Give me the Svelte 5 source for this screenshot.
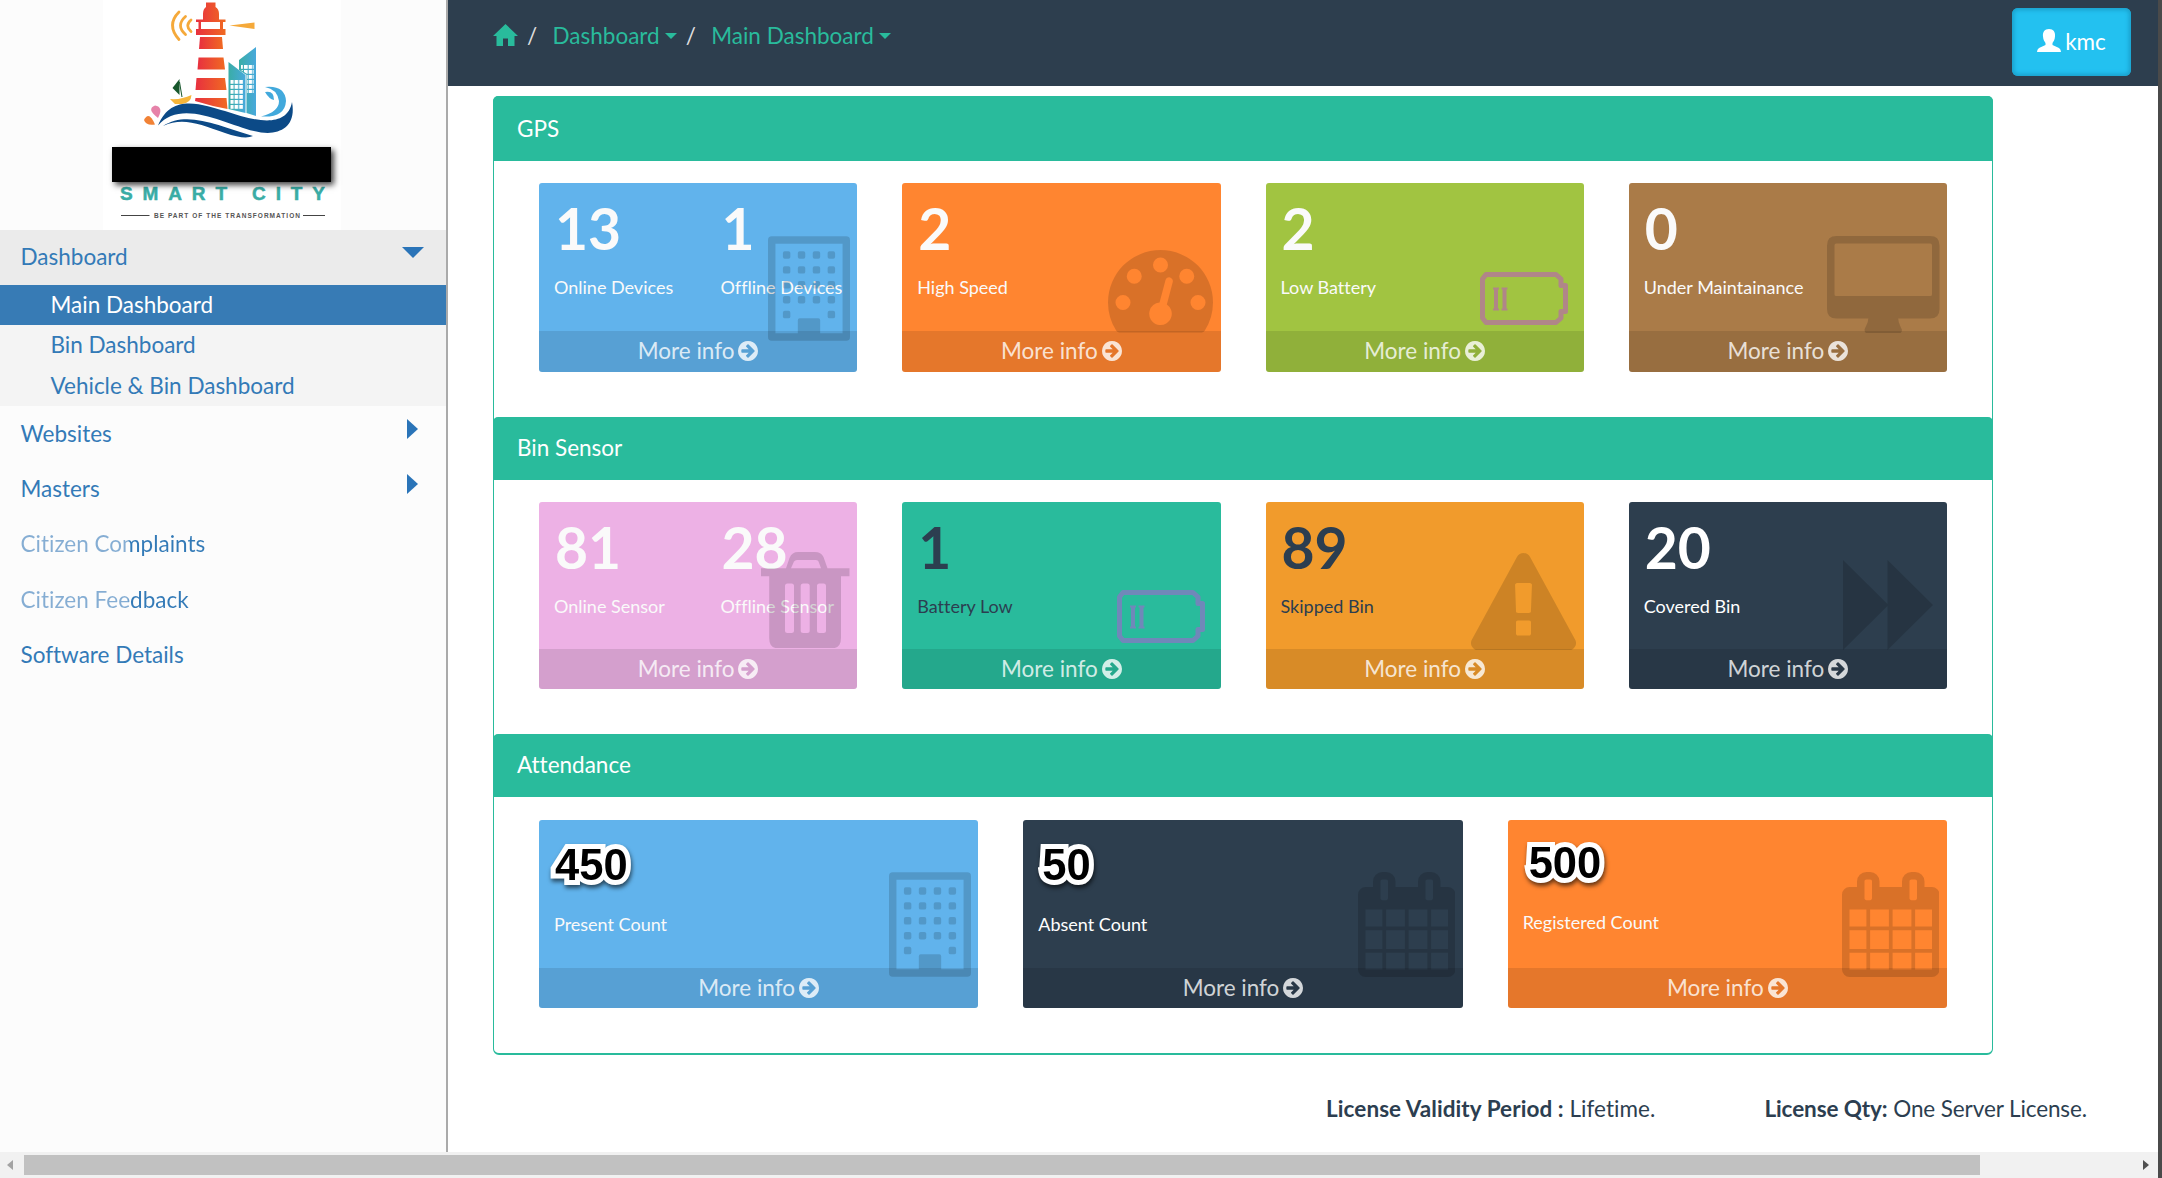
<script>
  const nav = [
    { label: 'Websites', arrow: true },
    { label: 'Masters', arrow: true },
    { label: 'Citizen Complaints', faded: true },
    { label: 'Citizen Feedback', faded: true },
    { label: 'Software Details' }
  ];

  const sections = [
    {
      title: 'GPS',
      kind: 'gps',
      cards: [
        { tone: 'sky', icon: 'building', stats: [['13', 'Online Devices'], ['1', 'Offline Devices']] },
        { tone: 'orange', icon: 'speed', stats: [['2', 'High Speed']] },
        { tone: 'lime', icon: 'battery', stats: [['2', 'Low Battery']] },
        { tone: 'brown', icon: 'desktop', stats: [['0', 'Under Maintainance']] }
      ]
    },
    {
      title: 'Bin Sensor',
      kind: 'bins',
      cards: [
        { tone: 'pink', icon: 'trash', stats: [['81', 'Online Sensor'], ['28', 'Offline Sensor']] },
        { tone: 'teal', icon: 'battery', stats: [['1', 'Battery Low']] },
        { tone: 'amber', icon: 'warning', stats: [['89', 'Skipped Bin']] },
        { tone: 'navy', icon: 'forward', stats: [['20', 'Covered Bin']] }
      ]
    },
    {
      title: 'Attendance',
      kind: 'attendance',
      cards: [
        { tone: 'sky', icon: 'building', stats: [['450', 'Present Count']] },
        { tone: 'navy', icon: 'calendar', stats: [['50', 'Absent Count']] },
        { tone: 'orange', icon: 'calendar', stats: [['500', 'Registered Count']] }
      ]
    }
  ];

  const windows = [0, 1, 2, 3, 4].flatMap((r) =>
    [0, 1, 2, 3].filter((c) => r < 4 || c === 0 || c === 3).map((c) => [256 + c * 256, 256 + r * 256])
  );
</script>

{#snippet icon(name)}
  {#if name === 'building'}
    <svg class="icon building" viewBox="0 0 1408 1792">
      <path fill-rule="evenodd" d="M64 0H1344Q1408 0 1408 64V1728Q1408 1792 1344 1792H64Q0 1792 0 1728V64Q0 0 64 0ZM128 128V1664H512V1440Q512 1408 544 1408H864Q896 1408 896 1440V1664H1280V128Z" />
      {#each windows as [x, y]}<rect {x} {y} width="128" height="128" rx="32" />{/each}
    </svg>
  {:else if name === 'speed'}
    <svg class="icon speed" viewBox="0 256 1792 1408"><path d="M384 1152q0-53-37.5-90.5t-90.5-37.5-90.5 37.5-37.5 90.5 37.5 90.5 90.5 37.5 90.5-37.5 37.5-90.5zm192-448q0-53-37.5-90.5t-90.5-37.5-90.5 37.5-37.5 90.5 37.5 90.5 90.5 37.5 90.5-37.5 37.5-90.5zm428 481l101-382q6-26-7.5-48.5t-38.5-29.5-48 6.5-30 39.5l-101 382q-60 5-107 43.5t-63 98.5q-20 77 20 146t117 89 146-20 89-117q16-60-6-117t-72-91zm660-33q0-53-37.5-90.5t-90.5-37.5-90.5 37.5-37.5 90.5 37.5 90.5 90.5 37.5 90.5-37.5 37.5-90.5zm-640-640q0-53-37.5-90.5t-90.5-37.5-90.5 37.5-37.5 90.5 37.5 90.5 90.5 37.5 90.5-37.5 37.5-90.5zm448 192q0-53-37.5-90.5t-90.5-37.5-90.5 37.5-37.5 90.5 37.5 90.5 90.5 37.5 90.5-37.5 37.5-90.5zm320 448q0 261-141 483-19 29-54 29h-1402q-35 0-54-29-141-221-141-483 0-182 71-348t191-286 286-191 348-71 348 71 286 191 191 286 71 348z" /></svg>
  {:else if name === 'battery'}
    <svg class="icon battery" viewBox="0 0 88 53">
      <path d="M6 2.5H76L81 7V13.5H85.5V39.5H81V46L76 50.5H6L2.5 46V7Z" fill="none" stroke="currentColor" stroke-width="5" stroke-linejoin="round" />
      <path d="M13 15.5h6v2h-1v19h1v2h-6v-2h1v-19h-1zM21.500 15.500h6v2h-1v19h1v2h-6v-2h1v-19h-1z" />
    </svg>
  {:else if name === 'desktop'}
    <svg class="icon desktop" viewBox="0 0 1920 1664"><path fill-rule="evenodd" d="M160 0H1760Q1920 0 1920 160V1248Q1920 1408 1760 1408H1216Q1216 1460 1248 1532T1280 1600Q1280 1664 1216 1664H704Q640 1664 640 1600Q640 1590 672 1525T704 1408H160Q0 1408 0 1248V160Q0 0 160 0ZM160 128Q128 128 128 160V992Q128 1024 160 1024H1760Q1792 1024 1792 992V160Q1792 128 1760 128Z" /></svg>
  {:else if name === 'trash'}
    <svg class="icon trash" viewBox="0 0 88.500 96.300"><path fill-rule="evenodd" d="M0 16.300H25L28.500 6Q31 0 37 0H54Q60 0 62.500 5L66.500 16.300H88.500V24.300H80V86Q80 96.300 71 96.300H17Q8.200 96.300 8.200 86V24.300H0ZM30 16.300H60L57.500 9.500Q57 8 55 8H36Q34 8 33 9.500ZM24 34q0-2.500 2.500-2.500h4q2.500 0 2.500 2.500v44.500q0 2.500-2.500 2.500h-4q-2.500 0-2.500-2.500zM39.700 34q0-2.500 2.500-2.500h4q2.500 0 2.500 2.500v44.500q0 2.500-2.500 2.500h-4q-2.500 0-2.500-2.500zM56 34q0-2.500 2.500-2.500h4q2.500 0 2.500 2.500v44.500q0 2.500-2.500 2.500h-4q-2.500 0-2.500-2.500z" /></svg>
  {:else if name === 'warning'}
    <svg class="icon warning" viewBox="0 0 1792 1664"><path d="M1024 1375v-190q0-14-9.500-23.500t-22.500-9.500h-192q-13 0-22.500 9.500t-9.500 23.500v190q0 14 9.500 23.500t22.500 9.500h192q13 0 22.500-9.500t9.500-23.500zm-2-374l18-459q0-12-10-19-13-11-24-11h-220q-11 0-24 11-10 7-10 21l17 457q0 10 10 16.500t24 6.500h185q14 0 23.500-6.500t10.500-16.500zm-14-934l768 1408q35 63-2 126-17 29-46.500 46t-63.500 17h-1536q-34 0-63.500-17t-46.500-46q-37-63-2-126l768-1408q17-31 47-49t65-18 65 18 47 49z" /></svg>
  {:else if name === 'forward'}
    <svg class="icon forward" viewBox="0 0 90 90"><path d="M0 0 44.500 44V0L90 45 44.500 90V46L0 90Z" /></svg>
  {:else}
    <svg class="icon calendar" viewBox="64 0 1664 1792"><path d="M192 1664h288v-288h-288v288zm352 0h320v-288h-320v288zm-352-352h288v-320h-288v320zm352 0h320v-320h-320v320zm-352-384h288v-288h-288v288zm736 736h320v-288h-320v288zm-384-736h320v-288h-320v288zm768 736h288v-288h-288v288zm-384-352h320v-320h-320v320zm-352-864v-288q0-13-9.500-22.500t-22.500-9.500h-64q-13 0-22.500 9.500t-9.500 22.500v288q0 13 9.500 22.500t22.500 9.500h64q13 0 22.500-9.500t9.500-22.500zm736 864h288v-320h-288v320zm-384-384h320v-288h-320v288zm384 0h288v-288h-288v288zm32-480v-288q0-13-9.500-22.500t-22.500-9.500h-64q-13 0-22.500 9.500t-9.500 22.500v288q0 13 9.500 22.500t22.500 9.500h64q13 0 22.500-9.500t9.500-22.500zm384-64v1280q0 52-38 90t-90 38h-1408q-52 0-90-38t-38-90v-1280q0-52 38-90t90-38h128v-96q0-66 47-113t113-47h64q66 0 113 47t47 113v96h384v-96q0-66 47-113t113-47h64q66 0 113 47t47 113v96h128q52 0 90 38t38 90z" /></svg>
  {/if}
{/snippet}

<div class="window">
  <div class="layout">
    <aside class="sidebar">
      <div class="logo">
        <svg viewBox="0 0 238 229" width="238" height="229">
          <defs>
            <linearGradient id="tower" x1="0" x2="1"><stop offset="0" stop-color="#e8303f" /><stop offset="1" stop-color="#f06a22" /></linearGradient>
            <linearGradient id="glass" x1="0" x2="1"><stop offset="0" stop-color="#3aada6" /><stop offset="1" stop-color="#48a9dc" /></linearGradient>
            <pattern id="panes" width="4.700" height="5" patternUnits="userSpaceOnUse"><rect width="3.600" height="3.800" fill="#fff" /></pattern>
          </defs>
          <g fill="none" stroke="#f5a93a" stroke-width="2.800" stroke-linecap="round">
            <path d="M76 12Q63 25 76 39.500" /><path d="M82.500 16.500Q72.500 25.500 82.500 34.500" /><path d="M88 20Q81.500 25.500 88 31.500" />
          </g>
          <path d="M126.500 25.500 151.500 22.500V29Z" fill="#f5a93a" />
          <g fill="url(#tower)">
            <path fill-rule="evenodd" d="M103 2.500H112.500V7Q116 9 116 14V19.500H122.500V22H120V29H122.500V35H93V29H95.500V22H93V19.500H100V14Q100 9 103 7ZM98 22V29H117V22Z" />
            <path d="M97 37H119L120 49H96Z" /><path d="M95.500 57.500H120.500L122 69.500H94.500Z" /><path d="M93.500 78H122L123.500 90H92.500Z" /><path d="M92.500 98H123.500L124.500 109Q108 106 92 101Z" />
          </g>
          <path d="M136 60 153 47V116L143.500 113V75L136 70Z" fill="url(#glass)" />
          <path d="M125.500 62 142.500 75V113L125.500 109Z" fill="url(#glass)" />
          <path d="M138 64H151V93H144V74L138 70Z" fill="url(#panes)" />
          <path d="M127.500 79H141V110H127.500Z" fill="url(#panes)" />
          <path d="M76.500 79V95L69.500 88Z" fill="#17572c" /><path d="M76.500 82 79 97" stroke="#17572c" />
          <path d="M67 99Q78 100 88.500 95Q88 103 79 104H72Z" fill="#f6b53a" />
          <path d="M52 105.500Q61 107 55 118Q43 109 52 105.500Z" fill="#e682a9" />
          <path d="M52 124.500Q43 126 41 120Q46 110 52 124.500Z" fill="#f18236" />
          <path d="M162 87Q182 85 183 101Q182 118 158 116.500Q176 112 176 101Q174 89 162 87Z" fill="#42a9dc" />
          <path d="M162 92Q171 90 171 100Q166 99 162 92Z" fill="#42a9dc" />
          <path d="M55 125.500C69 91 102 106 122 111C151 121 184 129 189 102C194 129 174 137 151 131C122 124 78 98 55 125.500Z" fill="#0c4a87" />
          <path d="M60 126C84 110 116 126 150 136Q142 140 122 133C96 124 80 117 60 126Z" fill="#0c4a87" />
          <text class="brand" x="17" y="200" textLength="205">SMART CITY</text>
          <path d="M18 215.500H46.500M200 215.500H222" stroke="#444" />
          <text class="tagline" x="51" y="218" textLength="146">BE PART OF THE TRANSFORMATION</text>
        </svg>
        <div class="redaction"></div>
      </div>
      <nav>
        <a class="item current">Dashboard <svg class="tri" viewBox="0 0 22 11" width="22" height="11"><path d="M0 0H22L11 11Z" /></svg></a>
        <div class="submenu">
          <a class="active">Main Dashboard</a>
          <a>Bin Dashboard</a>
          <a>Vehicle &amp; Bin Dashboard</a>
        </div>
        {#each nav as entry}
          <a class="item">
            <span class:faded={entry.faded}>{entry.label}</span>
            {#if entry.arrow}<svg class="tri side" viewBox="0 0 11 20" width="11" height="20"><path d="M0 0 11 10 0 20Z" /></svg>{/if}
          </a>
        {/each}
      </nav>
    </aside>

    <div class="page">
      <header>
        <div class="crumbs">
          <svg class="home" viewBox="0 0 25 22" width="25" height="22"><path d="M12.500 0 25 12H21.500V22H15V14.500H10V22H3.500V12H0Z" /></svg>
          <i class="slash">/</i>
          <span>Dashboard</span><b class="caret"></b>
          <i class="slash">/</i>
          <span>Main Dashboard</span><b class="caret"></b>
        </div>
        <button class="user">
          <svg viewBox="0 0 24 23" width="24" height="23"><path d="M12 0C16.500 0 18.500 3 18 7.500 17.800 11 16.500 12.500 15.500 14V16L22 19Q24 20.500 24 23H0Q0 20.500 2 19L8.500 16V14C7.500 12.500 6.200 11 6 7.500 5.500 3 7.500 0 12 0Z" fill="#fff" /></svg>
          kmc
        </button>
      </header>

      <main>
        <div class="panel">
          {#each sections as section}
            <section class={section.kind}>
              <h2>{section.title}</h2>
              <div class="cards">
                {#each section.cards as card}
                  <article class="card {card.tone}">
                    <div class="stats">
                      {#each card.stats as [value, label]}
                        <div class="stat"><strong>{value}</strong><span>{label}</span></div>
                      {/each}
                    </div>
                    <a class="more">More info
                      <svg viewBox="128 128 1536 1536" width="20" height="20"><path d="M1413 896q0-27-18-45l-91-91-362-362q-18-18-45-18t-45 18l-91 91q-18 18-18 45t18 45l189 189h-502q-26 0-45 19t-19 45v128q0 26 19 45t45 19h502l-189 189q-19 19-19 45t19 45l91 91q18 18 45 18t45-18l362-362 91-91q18-18 18-45zm251 0q0 209-103 385.500t-279.500 279.500-385.500 103-385.500-103-279.500-279.500-103-385.500 103-385.500 279.500-279.500 385.500-103 385.500 103 279.500 279.500 103 385.500z" /></svg>
                    </a>
                    {@render icon(card.icon)}
                  </article>
                {/each}
              </div>
            </section>
          {/each}
        </div>
      </main>
      <footer>
        <p class="validity"><b>License Validity Period :</b> Lifetime.</p>
        <p class="quantity"><b>License Qty:</b> One Server License.</p>
      </footer>
    </div>
  </div>
  <div class="scrollbar">
    <svg viewBox="0 0 6 10" width="6" height="10"><path d="M6 0V10L0 5Z" fill="#a3a3a3" /></svg>
    <div class="thumb"></div>
    <svg viewBox="0 0 6 10" width="6" height="10"><path d="M0 0V10L6 5Z" fill="#505050" /></svg>
  </div>
</div>

<style>
  :global(body) { margin: 0; background: #4a4a4a; overflow: hidden; }
  * { box-sizing: border-box; }
  .window {
    width: 2158px; height: 1178px; display: flex; flex-direction: column;
    background: #fff; color: #2c3e50; font: 22.5px/1.428 Lato, sans-serif;
    font-variant-ligatures: none;
  }
  .layout { flex: 1; min-height: 0; display: flex; }

  .sidebar { width: 448px; border-right: 2px solid #aaa; background: #fcfcfc; }
  .logo { position: relative; width: 238px; height: 230px; margin-left: 103px; background: #fff; }
  .logo svg { display: block; }
  .brand { font: bold 19px "Liberation Sans", sans-serif; fill: #3aada6; stroke: #3aada6; stroke-width: 0.5px; }
  .tagline { font: bold 6.5px "Liberation Sans", sans-serif; fill: #555; }
  .redaction {
    position: absolute; left: 9px; top: 147px; width: 219px; height: 35px;
    background: #000; box-shadow: 3px 3px 6px rgba(0, 0, 0, 0.75);
  }
  nav a { display: flex; color: #337ab7; }
  .item { height: 55.4px; padding: 11.500px 23px 0 20.500px; line-height: 32px; justify-content: space-between; }
  .item.current { background: #ebebeb; height: 55px; padding-top: 11px; }
  .tri { fill: #2a74b8; margin: 6px -1px 0 0; }
  .tri.side { margin: 1.500px 5px 0 0; }
  .submenu { background: #f4f4f4; height: 121px; }
  .submenu a { height: 40.4px; padding-left: 50.500px; line-height: 40px; }
  .submenu .active { background: #377bb5; color: #fff; }
  .faded {
    background: linear-gradient(90deg, #85add3 107px, #337ab7 109px);
    background-clip: text; color: transparent;
  }

  .page { flex: 1; display: flex; flex-direction: column; }
  header { height: 85.500px; background: #2d3e4e; display: flex; justify-content: space-between; padding: 8px 27px 0 45px; }
  .crumbs { display: flex; align-items: center; height: 56px; color: #29bb9c; margin-top: -8px; padding-top: 16px; }
  .home { fill: #29bb9c; margin-top: -3px; }
  .slash { font-style: normal; color: #ddd; width: 34.500px; padding-left: 9px; }
  .caret { border: 6px solid transparent; border-top-color: #29bb9c; border-bottom: 0; margin-left: 5px; }
  .user {
    width: 119px; height: 67.500px; border: 0; border-radius: 6px; background: #23c1f0; color: #fff;
    box-shadow: inset 0 0 4px 2px #1a9fca; font: inherit; padding: 0; display: flex; align-items: center; justify-content: center; gap: 4px;
  }
  .user svg { margin-top: -3px; }

  main { padding: 10.500px 0 0 45px; }
  .panel { width: 1500px; height: 959px; border: 1px solid #29bb9c; border-bottom-width: 2px; border-radius: 6px; }
  h2 { margin: 0 -1px; height: 63.300px; padding: 15px 0 0 24px; background: #29bb9c; color: #fff; font: inherit; line-height: 32px; border-radius: 5px 5px 0 0; }
  .gps h2 { margin-top: -1px; height: 64.500px; padding-top: 16.500px; }
  .attendance h2 { height: 63px; }
  .cards { display: flex; gap: 45px; padding: 22.500px 45px 45px; }
  .bins .cards { padding-top: 22.300px; }
  .card { position: relative; flex: 1 1 0; height: 188.700px; border-radius: 3px; overflow: hidden; color: #fafafa; display: flex; flex-direction: column; }
  .bins .card { height: 187px; }
  .stats { flex: 1; display: flex; padding: 16.800px 0 0 15px; }
  .stat { flex: none; width: 166.500px; white-space: nowrap; }
  .stat strong { display: block; font-size: 57px; line-height: 57px; font-weight: 700; text-indent: 1px; }
  .stat span { display: block; margin-top: 17.200px; font-size: 18px; line-height: 27px; }
  .attendance .stat strong {
    font-family: "Liberation Sans", sans-serif; font-size: 43.500px; color: #000; -webkit-text-stroke: 10px #fff;
    paint-order: stroke fill; filter: drop-shadow(1px 3px 2px rgba(0, 0, 0, 0.6));
  }
  .attendance .card:nth-child(2) strong { text-indent: 4px; }
  .attendance .card:nth-child(3) strong { text-indent: 6px; margin: -1.500px 0 1.500px; }
  .more { height: 40.500px; background: rgba(0, 0, 0, 0.1); color: rgba(255, 255, 255, 0.8); display: flex; justify-content: center; align-items: center; gap: 4px; }
  .more svg { fill: currentColor; }

  .sky { background: #61b3ec; }
  .orange { background: #ff8530; }
  .lime { background: #a1c441; color: #fafafa; }
  .brown { background: #aa7b48; }
  .pink { background: #edb1e5; }
  .teal { background: #29bb9c; color: #2c3e50; }
  .amber { background: #f19b2c; color: #2c3e50; }
  .navy { background: #2d3e4e; color: #fff; }

  .icon { position: absolute; right: 7.500px; top: 52.500px; fill: rgba(0, 0, 0, 0.15); }
  .building { width: 82px; height: 105px; }
  .speed { width: 105px; height: 82.500px; top: 67.300px; }
  .battery { width: 88px; height: 53px; top: 89px; right: 16px; color: #b08688; fill: currentColor; }
  .bins .battery { top: 87.400px; color: #7088b9; }
  .desktop { width: 112.500px; height: 97.500px; }
  .trash { width: 88.500px; height: 96.300px; top: 49.400px; }
  .warning { width: 105px; height: 97.500px; top: 50.700px; }
  .forward { width: 90px; height: 90px; top: 58px; right: 14.500px; }
  .calendar { width: 97.500px; height: 105px; }

  footer { display: flex; justify-content: flex-end; gap: 109px; padding: 38px 71px 0 0; }
  footer p { margin: 0; line-height: 32px; }
  .validity { letter-spacing: 0.06px; }
  .quantity { letter-spacing: -0.1px; }

  .scrollbar { height: 26px; background: #f1f1f1; display: flex; align-items: center; justify-content: space-between; padding: 0 9px 0 7px; }
  .thumb { width: 1956px; height: 20px; background: #c1c1c1; margin-right: auto; margin-left: 11px; }
</style>
